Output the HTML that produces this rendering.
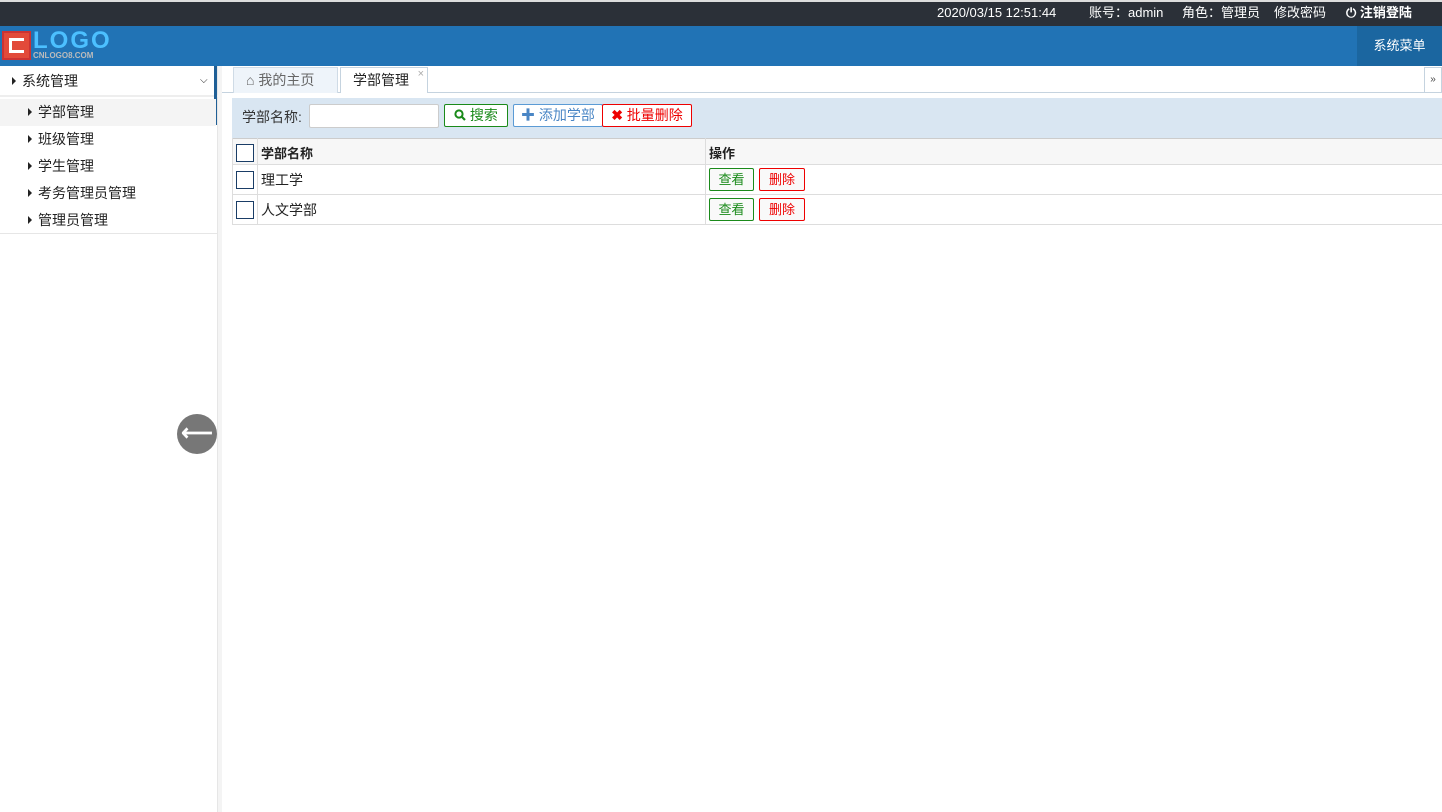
<!DOCTYPE html>
<html><head><meta charset="utf-8"><style>
*{margin:0;padding:0;box-sizing:border-box}
body{width:1442px;height:812px;overflow:hidden;font-family:"Liberation Sans","Noto Sans CJK SC",sans-serif;font-size:13px;color:#222;background:#fff;position:relative}
.abs{position:absolute}
.top{left:0;top:0;width:1442px;height:26px;background:#2b3038;border-top:2px solid #ddd;color:#fff;font-size:13px}
.top span{position:absolute;top:0;line-height:22px;height:22px}
.hdr{left:0;top:26px;width:1442px;height:40px;background:#2173b5}
.menu{right:0;top:26px;width:85px;height:40px;background:#1b66a0;color:#fff;font-size:13px;line-height:40px;text-align:center}
.side{left:0;top:66px;width:218px;height:746px;background:#fff;border-right:1px solid #e6e6e6}
.strip{left:218px;top:66px;width:4px;height:746px;background:#f4f4f4}
.tri{display:inline-block;width:0;height:0;border-left:4px solid #222;border-top:4px solid transparent;border-bottom:4px solid transparent;margin-right:6px;vertical-align:1px}
.item{position:absolute;left:0;width:216px;height:27px;line-height:27px;font-size:14px;padding-left:28px}
.btn{position:absolute;height:23px;border:1px solid;border-radius:2px;font-size:13px;line-height:21px;text-align:center;background:#fff}
.cb{position:absolute;width:18px;height:18px;border:1px solid #1a3d66;background:#fff}
.row{position:absolute;left:232px;width:1210px;border-bottom:1px solid #ddd}
</style></head><body>
<div class="abs top">
<span style="left:937px">2020/03/15 12:51:44</span>
<span style="left:1089px">账号：admin</span>
<span style="left:1182px">角色：管理员</span>
<span style="left:1274px">修改密码</span>
<span style="left:1346px;font-weight:bold">⏻ 注销登陆</span>
</div>
<div class="abs hdr"></div>
<div class="abs" style="left:2px;top:31px;width:29px;height:29px;background:#e24a3a;border:2px solid #c33"><div style="position:absolute;left:5px;top:5px;width:15px;height:15px;border:3px solid #fff;border-right:none"></div></div>
<div class="abs" style="left:33px;top:27px;color:#4cc0ff;font-size:24px;font-weight:bold;letter-spacing:2px;font-family:'Liberation Sans',sans-serif">LOGO</div>
<div class="abs" style="left:33px;top:51px;color:#bbb;font-size:8px;font-weight:bold">CNLOGO8.COM</div>
<div class="abs menu">系统菜单</div>
<div class="abs side">
<div class="abs" style="left:0;top:0;width:218px;height:31px;border-bottom:2px solid #eee;line-height:31px;font-size:14px;padding-left:12px"><span class="tri"></span>系统管理<span style="position:absolute;left:200px;top:-1px;font-size:10px">⌵</span></div>
<div class="abs" style="left:214px;top:0;width:3px;height:59px;background:#1f5f96"></div>
<div class="item" style="top:33px;background:#f4f4f4"><span class="tri"></span>学部管理</div>
<div class="item" style="top:60px"><span class="tri"></span>班级管理</div>
<div class="item" style="top:87px"><span class="tri"></span>学生管理</div>
<div class="item" style="top:114px"><span class="tri"></span>考务管理员管理</div>
<div class="item" style="top:141px"><span class="tri"></span>管理员管理</div>
<div class="abs" style="left:0;top:167px;width:218px;height:1px;background:#e6e6e6"></div>
</div>
<div class="abs strip"></div>
<div class="abs" style="left:177px;top:414px;width:40px;height:40px;border-radius:50%;background:#777;color:#fff;font-size:22px;line-height:38px;text-align:center;font-weight:bold">⟵</div>
<div class="abs" style="left:222px;top:92px;width:1220px;height:1px;background:#c5d3df"></div>
<div class="abs" style="left:233px;top:67px;width:105px;height:26px;background:#eef4fa;border:1px solid #cfdbe6;border-bottom:none;color:#666;font-size:14px;line-height:24px;padding-left:12px">⌂ 我的主页</div>
<div class="abs" style="left:340px;top:67px;width:88px;height:26px;background:#fff;border:1px solid #c5d3df;border-bottom:none;font-size:14px;line-height:24px;padding-left:12px">学部管理<span style="position:absolute;right:3px;top:-6px;color:#aaa;font-size:11px">×</span></div>
<div class="abs" style="left:1424px;top:67px;width:18px;height:26px;border:1px solid #c5d3df;background:#fff;font-size:10px;line-height:24px;text-align:center;color:#444">»</div>
<div class="abs" style="left:232px;top:98px;width:1210px;height:40px;background:#d9e6f2"></div>
<div class="abs" style="left:242px;top:107px;font-size:14px;color:#333">学部名称:</div>
<div class="abs" style="left:309px;top:104px;width:130px;height:24px;background:#fff;border:1px solid #ccc;border-radius:2px"></div>
<div class="btn" style="left:444px;top:104px;width:64px;border-color:#1a8a1a;color:#1a8a1a;font-size:14px"><svg width="12" height="12" viewBox="0 0 12 12" style="vertical-align:-1px"><circle cx="5" cy="5" r="3.6" fill="none" stroke="#1a8a1a" stroke-width="2"/><path d="M7.5 7.5L11 11" stroke="#1a8a1a" stroke-width="2.2"/></svg> 搜索</div>
<div class="btn" style="left:513px;top:104px;width:90px;border-color:#5b9bd5;color:#4a86c5;font-size:14px"><b>✚</b> 添加学部</div>
<div class="btn" style="left:602px;top:104px;width:90px;border-color:#e00;color:#e00;font-size:14px"><b>✖</b> 批量删除</div>
<div class="row" style="top:138px;height:27px;background:#f7f7f7;border-top:1px solid #ccc"></div>
<div class="row" style="top:165px;height:30px"></div>
<div class="row" style="top:195px;height:30px"></div>
<div class="abs" style="left:232px;top:138px;width:1px;height:87px;background:#ddd"></div>
<div class="abs" style="left:257px;top:138px;width:1px;height:87px;background:#ddd"></div>
<div class="abs" style="left:705px;top:138px;width:1px;height:87px;background:#ddd"></div>
<div class="cb" style="left:236px;top:144px"></div>
<div class="cb" style="left:236px;top:171px"></div>
<div class="cb" style="left:236px;top:201px"></div>
<div class="abs" style="left:261px;top:143px;font-weight:bold;font-size:13px">学部名称</div>
<div class="abs" style="left:709px;top:143px;font-weight:bold;font-size:13px">操作</div>
<div class="abs" style="left:261px;top:170px;font-size:14px">理工学</div>
<div class="abs" style="left:261px;top:200px;font-size:14px">人文学部</div>
<div class="btn" style="left:709px;top:168px;width:45px;border-color:#1a8a1a;color:#1a8a1a;background:#f9f9f9">查看</div>
<div class="btn" style="left:759px;top:168px;width:46px;border-color:#e00;color:#e00;background:#f9f9f9">删除</div>
<div class="btn" style="left:709px;top:198px;width:45px;border-color:#1a8a1a;color:#1a8a1a;background:#f9f9f9">查看</div>
<div class="btn" style="left:759px;top:198px;width:46px;border-color:#e00;color:#e00;background:#f9f9f9">删除</div>
</body></html>
